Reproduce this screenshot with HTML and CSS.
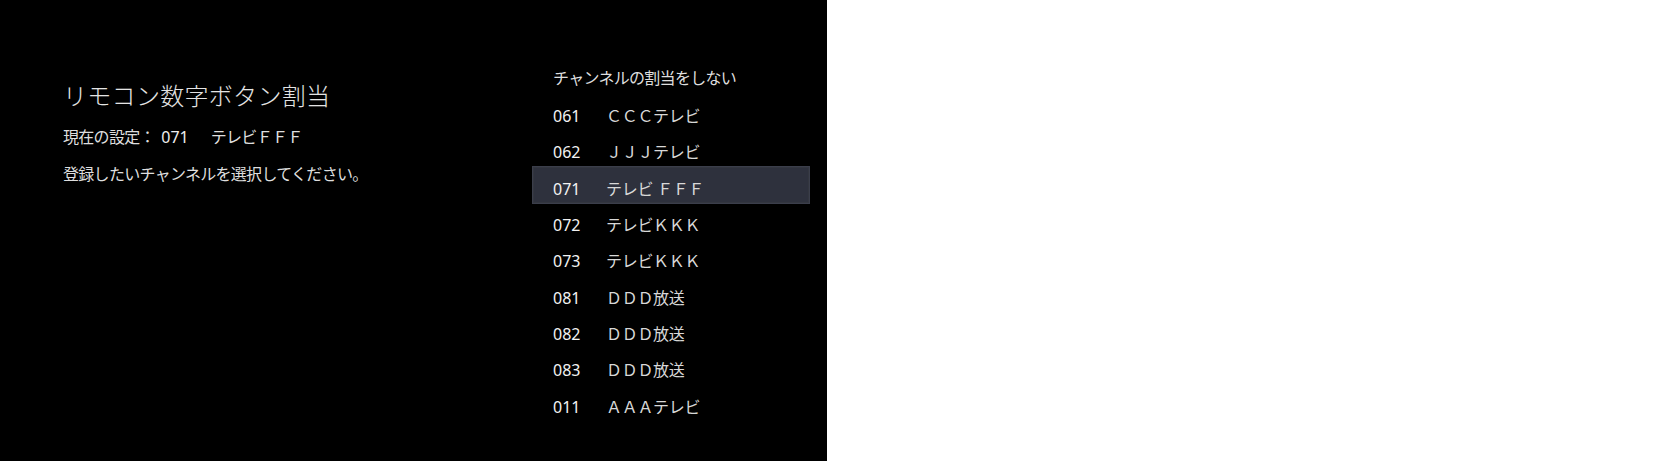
FILE: index.html
```html
<!DOCTYPE html>
<html lang="ja">
<head>
<meta charset="utf-8">
<title>リモコン数字ボタン割当</title>
<link rel="stylesheet" href="styles.css">
</head>
<body>
<div class="screen">
  <div class="panel">
    <div class="info">
      <h1 class="title">リモコン数字ボタン割当</h1>
      <p class="line">現在の設定： <span class="num">071</span><span class="cur">テレビＦＦＦ</span></p>
      <p class="line">登録したいチャンネルを選択してください。</p>
    </div>
    <ul class="list">
      <li class="head">チャンネルの割当をしない</li>
      <li class="row"><span class="num">061</span><span class="name">ＣＣＣテレビ</span></li>
      <li class="row"><span class="num">062</span><span class="name">ＪＪＪテレビ</span></li>
      <li class="row selected"><span class="num">071</span><span class="name">テレビ ＦＦＦ</span></li>
      <li class="row"><span class="num">072</span><span class="name">テレビＫＫＫ</span></li>
      <li class="row"><span class="num">073</span><span class="name">テレビＫＫＫ</span></li>
      <li class="row"><span class="num">081</span><span class="name">ＤＤＤ放送</span></li>
      <li class="row"><span class="num">082</span><span class="name">ＤＤＤ放送</span></li>
      <li class="row"><span class="num">083</span><span class="name">ＤＤＤ放送</span></li>
      <li class="row"><span class="num">011</span><span class="name">ＡＡＡテレビ</span></li>
    </ul>
  </div>
  <div class="blank"></div>
</div>
</body>
</html>
```
FILE: styles.css
```css
html, body {
  margin: 0;
  padding: 0;
  background: #ffffff;
}

body {
  font-family: "Noto Sans", "Noto Sans CJK JP", sans-serif;
  color: #e2e2e2;
}

.screen {
  display: grid;
  grid-template-columns: 827px 1fr;
  width: 1654px;
  height: 461px;
}

.panel {
  background: #000000;
  display: grid;
  grid-template-columns: 469px 278px;
  padding-left: 63px;
  height: 461px;
  box-sizing: border-box;
  overflow: hidden;
}

.blank {
  background: #ffffff;
}

.info {
  padding-top: 80px;
}

.title {
  margin: 0;
  font-size: 24px;
  font-weight: 300;
  line-height: 32px;
  letter-spacing: 0.3px;
  color: #e4e4e4;
}

.line {
  margin: 13px 0 0;
  font-size: 16px;
  line-height: 24px;
  letter-spacing: -0.7px;
  color: #dedede;
}

.line .num {
  color: #eeeeee;
  letter-spacing: 0;
  margin-left: 3px;
  margin-right: 22px;
}

.list {
  list-style: none;
  margin: 0;
  padding: 58px 0 0;
  font-size: 16px;
}

.head {
  height: 36.3px;
  box-sizing: border-box;
  padding: 6px 0 0 21px;
  line-height: 28px;
  letter-spacing: -0.7px;
  color: #dedede;
}

.row {
  display: grid;
  grid-template-columns: 53px 1fr;
  height: 36.3px;
  box-sizing: border-box;
  padding: 7.9px 0 0 21px;
  line-height: 28.4px;
}

.row .num {
  color: #f2f2f2;
}

.row .name {
  color: #d8d8d8;
  letter-spacing: -0.3px;
}

.row.selected {
  margin: -1px 0;
  height: 38.3px;
  padding-left: 20px;
  background: #2e313d;
  border: 1px solid #3b3e4b;
  box-shadow: inset 0 0 0 1px #33363f;
}
```
